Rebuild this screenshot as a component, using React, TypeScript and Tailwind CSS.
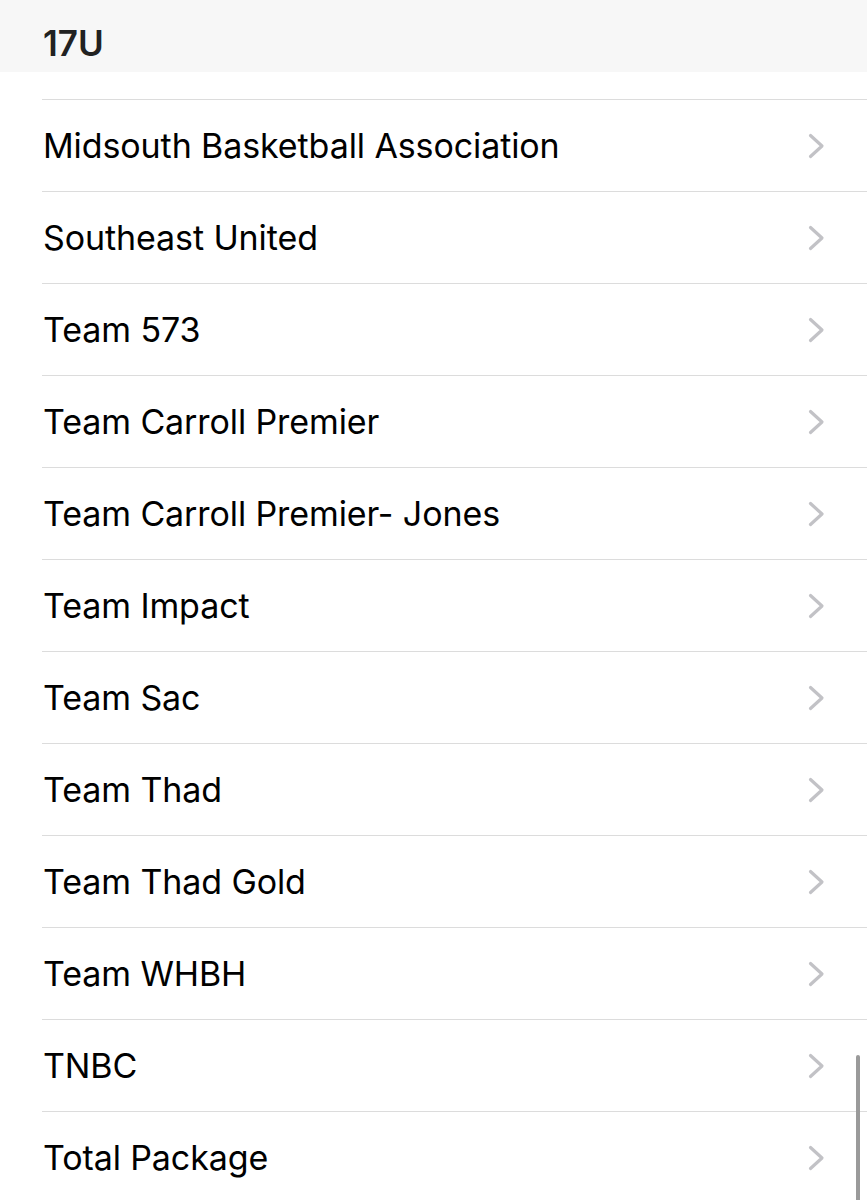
const teams = [
  "Midsouth Basketball Association",
  "Southeast United",
  "Team 573",
  "Team Carroll Premier",
  "Team Carroll Premier- Jones",
  "Team Impact",
  "Team Sac",
  "Team Thad",
  "Team Thad Gold",
  "Team WHBH",
  "TNBC",
  "Total Package",
];

function Chevron() {
  return (
    <svg width="17" height="26" viewBox="0 0 17 26" fill="none" className="shrink-0">
      <path d="M2.5 2.5 L14 13 L2.5 23.5" stroke="#c2c2c6" strokeWidth="3.2" strokeLinecap="round" strokeLinejoin="round" />
    </svg>
  );
}

export default function App() {
  return (
    <div className="relative h-[1200px] w-full overflow-hidden bg-white font-['Inter','Liberation_Sans',sans-serif] text-black">
      <div className="h-[72px] bg-[#f7f7f7] pl-[43px] pt-[25px]">
        <h2 className="text-[35px] leading-9 font-semibold text-[#222]">17U</h2>
      </div>
      <div className="h-[27px]" />
      <ul className="ml-[42px]">
        {teams.map((t) => (
          <li key={t} className="flex h-[92px] items-center justify-between border-t border-[#dcdcdc] pr-[42px]">
            <span className="pl-px text-[34px] leading-none tracking-[-0.1px]">{t}</span>
            <Chevron />
          </li>
        ))}
      </ul>
      <div className="absolute top-[1055px] right-[7px] h-[160px] w-[4px] rounded-full bg-[#9a9a9a]" />
    </div>
  );
}
